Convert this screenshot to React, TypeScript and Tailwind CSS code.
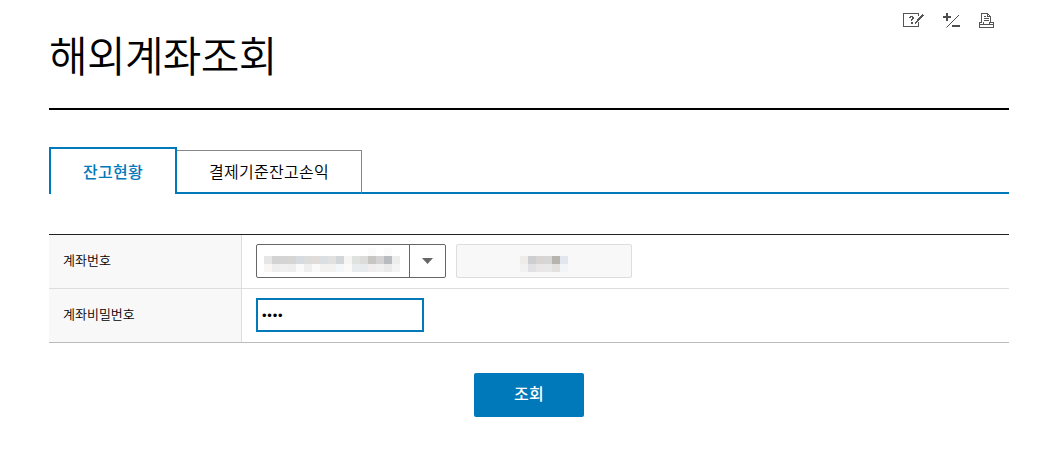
import React, { useState } from 'react';
import clsx from 'clsx';

const tabs = ['잔고현황', '결제기준잔고손익'];

// masked values, one colour per 8px block
const accountMask = [
    '#ffffff', '#ffffff', '#ffffff', '#ffffff', '#ffffff', '#ffffff', '#ffffff', '#ffffff', '#ffffff', '#ffffff', '#ffffff', '#ffffff', '#ffffff', '#fbfbfb', '#ffffff', '#fbfbfb', '#ffffff',
    '#e6e6e6', '#d3d3d3', '#d4d4d4', '#d6d5d4', '#d6dbe1', '#dcdcdc', '#e1dcda', '#dadfe3', '#e1e1e1', '#d3d6d9', '#f7f5f3', '#dfe2df', '#dcdcda', '#c8c6c4', '#d4d2d3', '#b8bbbf', '#ededed',
    '#f9f7f6', '#eeeeee', '#f0f0f0', '#efeeee', '#fafafa', '#efeff0', '#fafafa', '#f4f2f1', '#f4f2f0', '#f4f7fa', '#fbfaf8', '#e9ecef', '#e8ebee', '#efedee', '#f0f0f1', '#eaeaea', '#f4f4f4',
];
const nameMask = [
    '#edece8', '#cdced1', '#d8d4d1', '#d6d6d6', '#b7b3ad', '#e1e6ef',
    '#f1f1f1', '#e1e1e3', '#e8e6e6', '#e8e8e8', '#e3e1df', '#f3f4f7',
];

const Mask: React.FC<{ colors: string[]; className: string }> = ({ colors, className }) => (
    <div className={clsx('grid', className)}>
        {colors.map((color, i) => (
            <span key={i} className="h-2 w-2" style={{ backgroundColor: color }} />
        ))}
    </div>
);

const HelpIcon = () => (
    <svg width="21" height="15" viewBox="0 0 21 15" fill="none" stroke="#555" shapeRendering="crispEdges">
        <path d="M16 .5H.5v13h15V9M15.500 1v2" />
        <path d="M7 3.500h3M6 4.500h2M9 4.500h2M9 5.500h2M8 6.500h2M8 7.500h1M8 9.500h2M8 10.500h2" />
        <path d="M19 1.500h1M18 2.500h3M17 3.500h3M16 4.500h3M15 5.500h3M14 6.500h3M14 7.500h2M13 8.500h2M12 9.500h2M12 10.500h1" />
    </svg>
);

const ZoomIcon = () => (
    <svg width="17" height="15" viewBox="0 0 17 15" fill="none" stroke="#4d4d4d">
        <path d="M0 4h8M4 0v8" strokeWidth="2" />
        <path d="M16 2L3.500 14.500" />
        <path d="M9 13h8" strokeWidth="2" />
    </svg>
);

const PrintIcon = () => (
    <svg width="15" height="15" viewBox="0 0 15 15" fill="none" stroke="#555" shapeRendering="crispEdges">
        <path d="M2.500 9V.5H9M11.500 3v7M8.500 1v3M9 3.500h3M9 1.500h1M10 2.500h1" />
        <path d="M5 3.500h2M5 5.500h5M5 7.500h5" />
        <path d="M3 9.500H.5v5h14v-5H11M4.500 9v3M10.500 9v3M1 11.500h13" />
    </svg>
);

export default function App() {
    const [active, setActive] = useState(0);
    const [password, setPassword] = useState('0000');

    return (
        <main className="h-[454px] bg-white pr-[51px] pl-[49px] font-['Noto_Sans_CJK_KR',sans-serif] text-black">
            <header className="flex h-[110px] items-start justify-between border-b-2 border-black">
                <h1 className="mt-6 text-[42px] leading-[60px] font-[350] tracking-[-0.7px]">해외계좌조회</h1>
                <div className="mt-[13px] mr-[15px] flex">
                    <button aria-label="도움말"><HelpIcon /></button>
                    <button aria-label="확대/축소" className="ml-[19px]"><ZoomIcon /></button>
                    <button aria-label="인쇄" className="ml-[19px]"><PrintIcon /></button>
                </div>
            </header>

            <nav className="mt-[37px] flex h-[47px] items-end">
                {tabs.map((tab, i) => (
                    <button
                        key={tab}
                        onClick={() => setActive(i)}
                        className={clsx(
                            'text-base tracking-[0.28px]',
                            active === i
                                ? 'h-[47px] w-32 border-2 border-b-0 border-[#0079ba] pb-[1px] font-medium text-[#0079ba]'
                                : 'h-[44px] w-[185px] border-t border-r border-b-2 border-t-[#888] border-r-[#888] border-b-[#0079ba] pb-[2px] font-[350]'
                        )}
                    >
                        {tab}
                    </button>
                ))}
                <div className="h-[2px] flex-1 bg-[#0079ba]" />
            </nav>

            <section className="mt-10 border-t border-b border-t-[#222] border-b-[#bbb] text-[13px]">
                <div className="flex h-[54px] border-b border-[#ddd]">
                    <div className="flex w-[193px] items-center border-r border-[#ddd] bg-[#f8f8f8] pb-1 pl-[14px] font-[350]">계좌번호</div>
                    <div className="flex items-center gap-[10px] pb-[2px] pl-[14px]">
                        <button aria-label="계좌번호 선택" className="flex h-[34px] w-[190px] rounded-[2px] border border-[#666]">
                            <span className="h-full w-[153px] border-r border-[#666] pt-[3px] pl-[7px]">
                                <Mask colors={accountMask} className="w-[136px] grid-cols-[repeat(17,8px)]" />
                            </span>
                            <span className="flex h-full flex-1 items-center justify-center">
                                <svg width="11" height="6" viewBox="0 0 11 6" fill="#666">
                                    <path d="M0 0h11L5.500 6z" />
                                </svg>
                            </span>
                        </button>
                        <div className="flex h-[34px] w-44 justify-center rounded-[2px] border border-[#ddd] bg-[#f8f8f8] pt-[11px]">
                            <Mask colors={nameMask} className="h-4 w-12 grid-cols-[repeat(6,8px)]" />
                        </div>
                    </div>
                </div>
                <div className="flex h-[53px]">
                    <div className="flex w-[193px] items-center border-r border-[#ddd] bg-[#f8f8f8] pb-[3px] pl-[14px] font-[350]">계좌비밀번호</div>
                    <div className="flex items-center pb-[1px] pl-[14px]">
                        <input
                            type="password"
                            aria-label="계좌비밀번호"
                            value={password}
                            onChange={(e) => setPassword(e.target.value)}
                            className="h-[34px] w-[168px] border-2 border-[#0079ba] px-1 font-['Liberation_Sans',sans-serif] text-[13px] tracking-[0.8px] outline-none"
                        />
                    </div>
                </div>
            </section>

            <div className="mt-[30px] flex justify-center">
                <button className="h-11 w-[110px] rounded-[2px] bg-[#0079ba] pb-1 text-base font-medium tracking-[0.28px] text-white">조회</button>
            </div>
        </main>
    );
}
